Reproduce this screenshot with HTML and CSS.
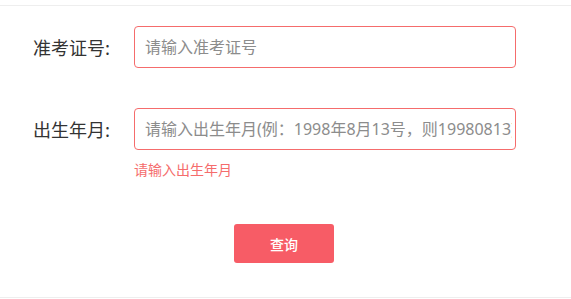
FILE: index.html
```html
<!DOCTYPE html>
<html lang="zh-CN">
<head>
<meta charset="utf-8">
<title>查询</title>
<link rel="stylesheet" href="styles.css">
</head>
<body>
<div class="page">
  <form class="form">
    <div class="row">
      <label class="label">准考证号:</label>
      <input class="field" type="text" placeholder="请输入准考证号">
    </div>
    <div class="row row-gap">
      <label class="label">出生年月:</label>
      <input class="field" type="text" placeholder="请输入出生年月(例：1998年8月13号，则19980813)">
    </div>
    <div class="error">请输入出生年月</div>
    <div class="actions">
      <button class="btn" type="button">查询</button>
    </div>
  </form>
</div>
</body>
</html>
```
FILE: styles.css
```css
html, body {
  margin: 0;
  padding: 0;
  background: #fff;
}
.page {
  padding-top: 5px;
  font-family: "Noto Sans CJK SC", "Noto Sans", sans-serif;
}
.form {
  border-top: 1px solid #eeeeee;
  border-bottom: 1px solid #eeeeee;
  padding-top: 20px;
  padding-bottom: 34px;
  margin: 0;
}
.row {
  display: flex;
  align-items: center;
}
.row-gap {
  margin-top: 40px;
}
.label {
  width: 134px;
  padding-right: 24px;
  box-sizing: border-box;
  text-align: right;
  font-size: 18px;
  color: #333333;
}
.field {
  width: 382px;
  height: 42px;
  box-sizing: border-box;
  border: 1px solid #f56c6c;
  border-radius: 4px;
  padding: 0 3px 0 10px;
  font-family: "Noto Sans", "Noto Sans CJK SC", sans-serif;
  font-size: 16px;
  color: #333;
  outline: none;
  background: #fff;
}
.field::placeholder {
  color: #8c8c8c;
}
.error {
  margin-top: 11px;
  margin-left: 134px;
  font-size: 14px;
  line-height: 16px;
  color: #f56c6c;
}
.actions {
  margin-top: 47px;
  padding-left: 234px;
  display: flex;
}
.btn {
  width: 100px;
  height: 39px;
  border: none;
  border-radius: 3px;
  background: #f75c66;
  color: #fff;
  font-family: "Noto Sans CJK SC", "Noto Sans", sans-serif;
  font-size: 14px;
  font-weight: 500;
  padding: 0;
  cursor: pointer;
}
```
